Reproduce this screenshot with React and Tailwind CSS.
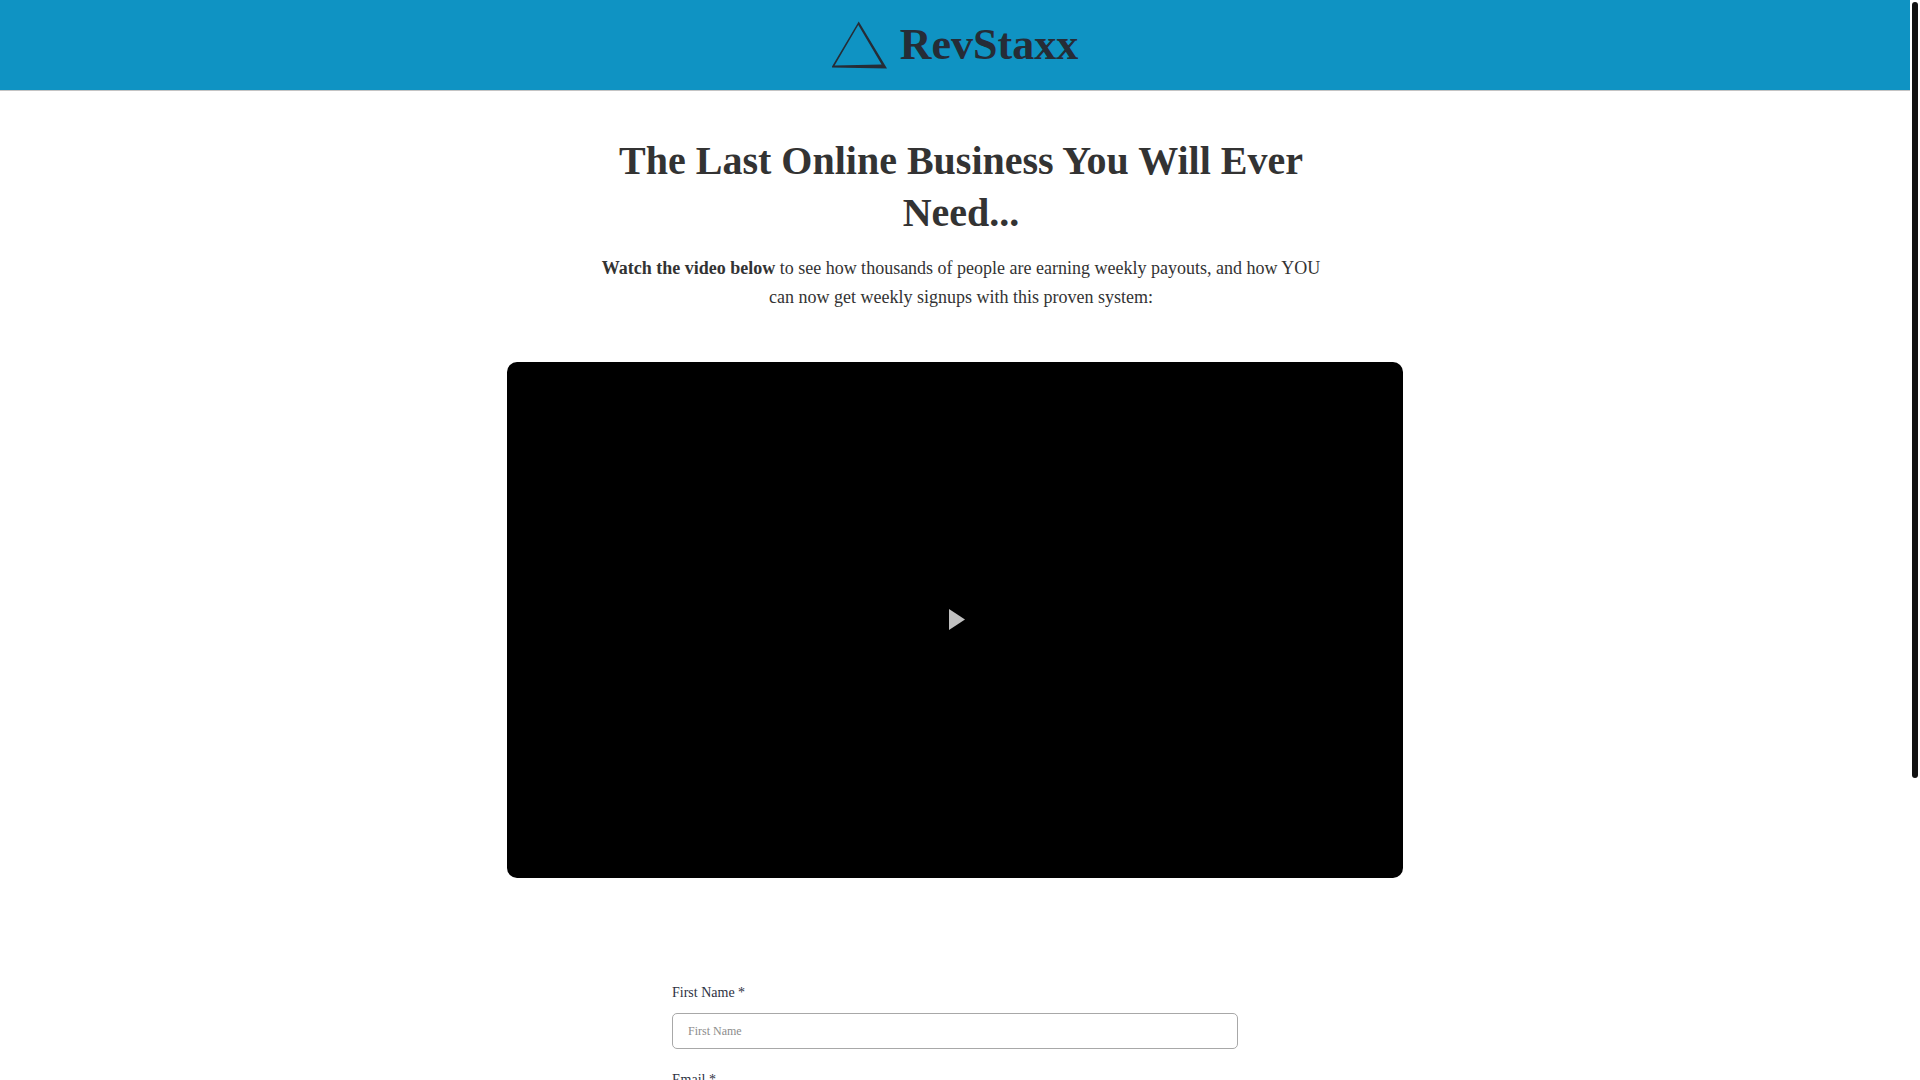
import React, { useState } from 'react';

const fields = [
  { id: 'firstName', label: 'First Name', type: 'text' },
  { id: 'email', label: 'Email', type: 'email' },
];

const Logo = () => (
  <a href="#" className="flex items-center gap-3 text-[#262c36]">
    <svg viewBox="0 0 56 48" className="w-14 h-12" fill="currentColor" aria-hidden="true">
      <path
        fillRule="evenodd"
        d="M26.7 0.5 L55 47.4 L-0.5 46.4 Z M26.3 4 L2.6 44.6 L49.6 43.6 Z"
      />
    </svg>
    <span className="text-[44px] leading-12 font-bold">RevStaxx</span>
  </a>
);

const VideoPlayer = () => (
  <div className="w-full max-w-4xl h-[516px] mx-auto rounded-[10px] bg-black flex items-center justify-center">
    <button type="button" aria-label="Play video" className="p-3 cursor-pointer">
      <svg viewBox="0 0 20 23" className="w-5 h-[23px]" fill="#c0c0c0">
        <path d="M4 0 L20 10.5 L4 21 Z" />
      </svg>
    </button>
  </div>
);

const OptInForm = () => {
  const [values, setValues] = useState({ firstName: '', email: '' });

  const handleChange = (e) => {
    setValues({ ...values, [e.target.name]: e.target.value });
  };

  return (
    <form className="w-full max-w-[566px] mx-auto mt-[105px] space-y-[21px]">
      {fields.map((field) => (
        <div key={field.id}>
          <label htmlFor={field.id} className="block text-sm leading-5 mb-2.5 text-[#2d3142]">
            {field.label} *
          </label>
          <input
            id={field.id}
            name={field.id}
            type={field.type}
            placeholder={field.label}
            value={values[field.id]}
            onChange={handleChange}
            className="block w-full h-9 px-[15px] text-xs rounded-[5px] border border-[#a8a8a8] bg-white text-[#2d3142] placeholder:text-[#8c8c8c]"
          />
        </div>
      ))}
    </form>
  );
};

const App = () => {
  return (
    <div className="flex h-screen overflow-hidden bg-white font-['Liberation_Serif',serif]">
      <div className="flex-1 min-w-0 overflow-y-auto [scrollbar-width:none]">
        <header className="h-[91px] flex items-center justify-center bg-[#0f93c3] border-b border-[#c4c4c4]">
          <Logo />
        </header>

        <main>
          <div className="max-w-[752px] mx-auto mt-11 pl-3 text-center text-[#333333]">
            <h1 className="text-[40px] leading-[52px] font-bold">
              The Last Online Business You Will Ever Need...
            </h1>
            <p className="mt-[15px] mb-[50px] text-lg leading-[29px]">
              <b>Watch the video below</b> to see how thousands of people are earning weekly
              payouts, and how YOU can now get weekly signups with this proven system:
            </p>
          </div>

          <VideoPlayer />
          <OptInForm />
        </main>
      </div>

      {/* scroll track */}
      <div className="w-2.5 h-full px-0.5 pt-0.5">
        <div className="h-[72%] rounded-full bg-[#111111]" />
      </div>
    </div>
  );
};

export default App;
